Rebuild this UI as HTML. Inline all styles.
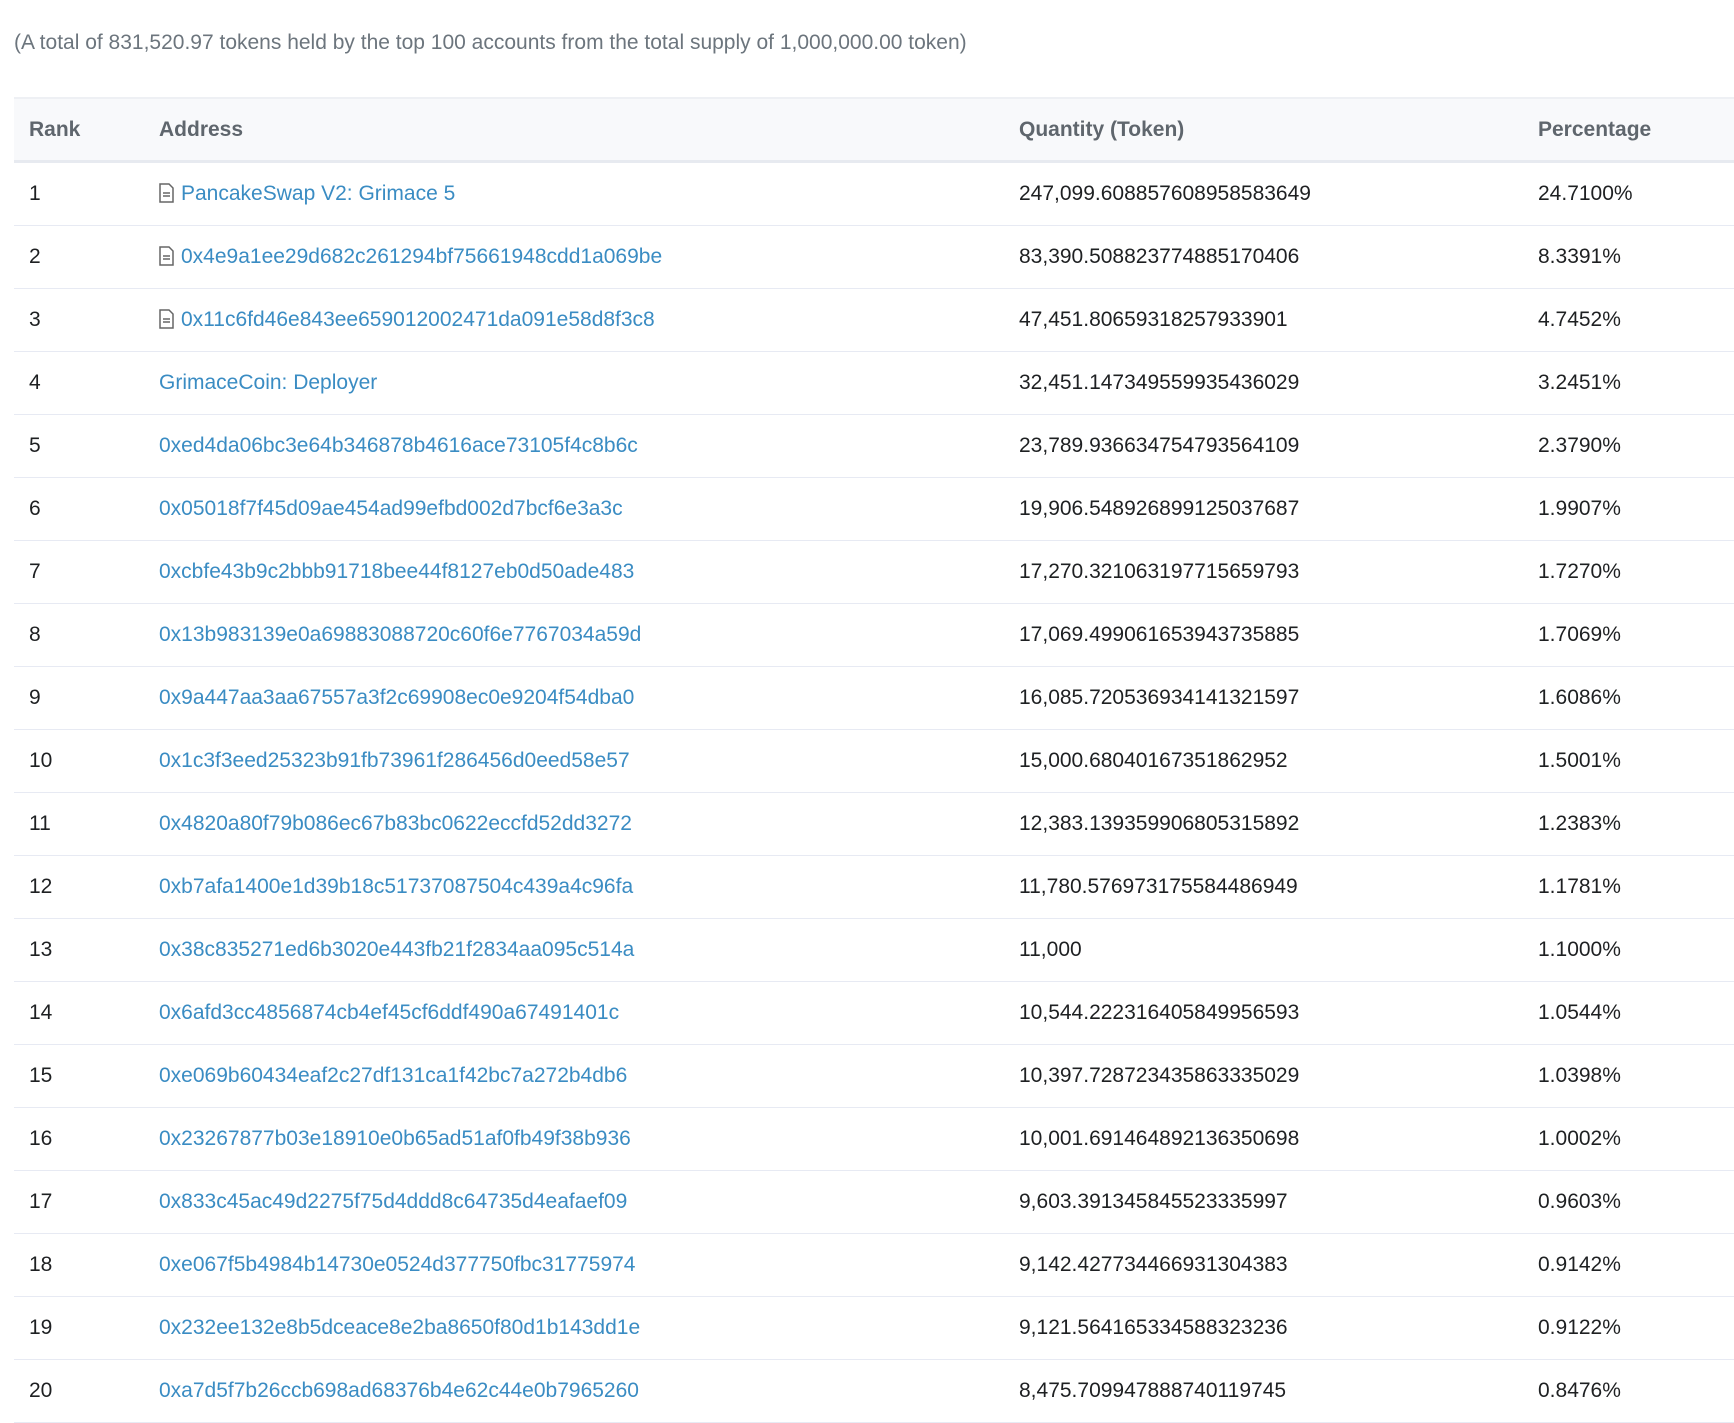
<!DOCTYPE html>
<html><head><meta charset="utf-8"><style>
body{margin:0;background:#fff;font-family:"Liberation Sans",sans-serif;color:#1e2022;width:1734px;height:1423px;overflow:hidden}
.sum{position:absolute;left:14px;top:31px;font-size:21px;color:#6c757d}
table{position:absolute;left:14px;top:97px;width:1720px;border-collapse:collapse;font-size:21px}
th{background:#f8f9fb;height:61px;text-align:left;color:#5f666d;font-weight:bold;border-top:2px solid #eef0f4;border-bottom:3px solid #e7eaf0;padding:0}
td{height:62px;border-bottom:1px solid #e7eaf3;padding:0}
.r{padding-left:15px;width:130px}
.a{width:860px}
.q{width:519px}
a{color:#3a8cc3;text-decoration:none}
.ic{display:inline-block;width:15px;height:20px;vertical-align:-3px;margin-right:7px}
</style></head><body>
<div class="sum">(A total of 831,520.97 tokens held by the top 100 accounts from the total supply of 1,000,000.00 token)</div>
<table>
<tr><th class="r">Rank</th><th class="a">Address</th><th class="q">Quantity (Token)</th><th>Percentage</th></tr>
<tr><td class="r">1</td><td><svg class="ic" viewBox="0 0 15 20"><path d="M1 1h9l4 4v14H1z" fill="none" stroke="#666" stroke-width="1.5"/><path d="M4 10h7M4 13h7" stroke="#666" stroke-width="1.4"/></svg><a>PancakeSwap V2: Grimace 5</a></td><td>247,099.608857608958583649</td><td>24.7100%</td></tr>
<tr><td class="r">2</td><td><svg class="ic" viewBox="0 0 15 20"><path d="M1 1h9l4 4v14H1z" fill="none" stroke="#666" stroke-width="1.5"/><path d="M4 10h7M4 13h7" stroke="#666" stroke-width="1.4"/></svg><a>0x4e9a1ee29d682c261294bf75661948cdd1a069be</a></td><td>83,390.508823774885170406</td><td>8.3391%</td></tr>
<tr><td class="r">3</td><td><svg class="ic" viewBox="0 0 15 20"><path d="M1 1h9l4 4v14H1z" fill="none" stroke="#666" stroke-width="1.5"/><path d="M4 10h7M4 13h7" stroke="#666" stroke-width="1.4"/></svg><a>0x11c6fd46e843ee659012002471da091e58d8f3c8</a></td><td>47,451.80659318257933901</td><td>4.7452%</td></tr>
<tr><td class="r">4</td><td><a>GrimaceCoin: Deployer</a></td><td>32,451.147349559935436029</td><td>3.2451%</td></tr>
<tr><td class="r">5</td><td><a>0xed4da06bc3e64b346878b4616ace73105f4c8b6c</a></td><td>23,789.936634754793564109</td><td>2.3790%</td></tr>
<tr><td class="r">6</td><td><a>0x05018f7f45d09ae454ad99efbd002d7bcf6e3a3c</a></td><td>19,906.548926899125037687</td><td>1.9907%</td></tr>
<tr><td class="r">7</td><td><a>0xcbfe43b9c2bbb91718bee44f8127eb0d50ade483</a></td><td>17,270.321063197715659793</td><td>1.7270%</td></tr>
<tr><td class="r">8</td><td><a>0x13b983139e0a69883088720c60f6e7767034a59d</a></td><td>17,069.499061653943735885</td><td>1.7069%</td></tr>
<tr><td class="r">9</td><td><a>0x9a447aa3aa67557a3f2c69908ec0e9204f54dba0</a></td><td>16,085.720536934141321597</td><td>1.6086%</td></tr>
<tr><td class="r">10</td><td><a>0x1c3f3eed25323b91fb73961f286456d0eed58e57</a></td><td>15,000.68040167351862952</td><td>1.5001%</td></tr>
<tr><td class="r">11</td><td><a>0x4820a80f79b086ec67b83bc0622eccfd52dd3272</a></td><td>12,383.139359906805315892</td><td>1.2383%</td></tr>
<tr><td class="r">12</td><td><a>0xb7afa1400e1d39b18c51737087504c439a4c96fa</a></td><td>11,780.576973175584486949</td><td>1.1781%</td></tr>
<tr><td class="r">13</td><td><a>0x38c835271ed6b3020e443fb21f2834aa095c514a</a></td><td>11,000</td><td>1.1000%</td></tr>
<tr><td class="r">14</td><td><a>0x6afd3cc4856874cb4ef45cf6ddf490a67491401c</a></td><td>10,544.222316405849956593</td><td>1.0544%</td></tr>
<tr><td class="r">15</td><td><a>0xe069b60434eaf2c27df131ca1f42bc7a272b4db6</a></td><td>10,397.728723435863335029</td><td>1.0398%</td></tr>
<tr><td class="r">16</td><td><a>0x23267877b03e18910e0b65ad51af0fb49f38b936</a></td><td>10,001.691464892136350698</td><td>1.0002%</td></tr>
<tr><td class="r">17</td><td><a>0x833c45ac49d2275f75d4ddd8c64735d4eafaef09</a></td><td>9,603.391345845523335997</td><td>0.9603%</td></tr>
<tr><td class="r">18</td><td><a>0xe067f5b4984b14730e0524d377750fbc31775974</a></td><td>9,142.427734466931304383</td><td>0.9142%</td></tr>
<tr><td class="r">19</td><td><a>0x232ee132e8b5dceace8e2ba8650f80d1b143dd1e</a></td><td>9,121.564165334588323236</td><td>0.9122%</td></tr>
<tr><td class="r">20</td><td><a>0xa7d5f7b26ccb698ad68376b4e62c44e0b7965260</a></td><td>8,475.709947888740119745</td><td>0.8476%</td></tr>
</table>
</body></html>
